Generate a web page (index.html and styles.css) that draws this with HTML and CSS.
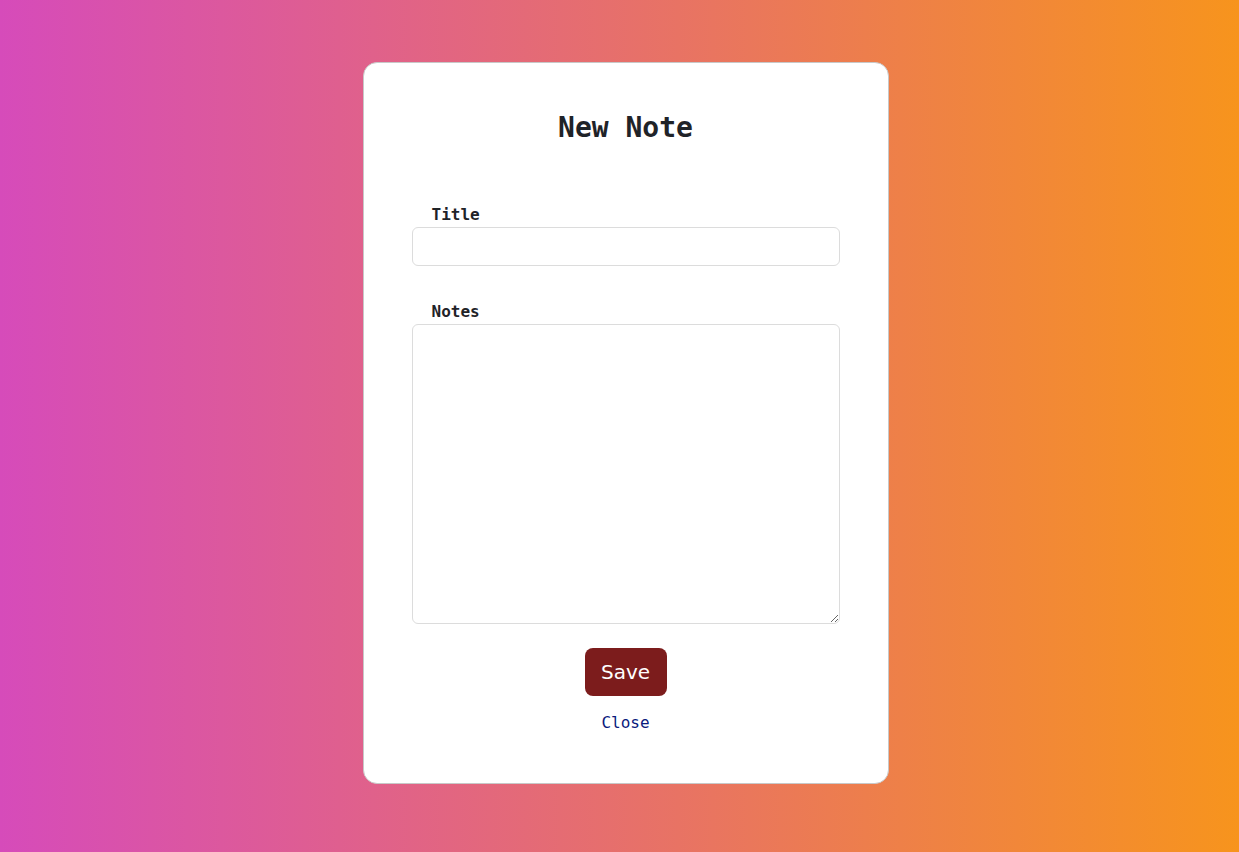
FILE: index.html
```html
<!DOCTYPE html>
<html>
<head>
<meta charset="utf-8">
<link rel="stylesheet" href="styles.css">
</head>
<body>
<div class="page">
  <div class="card">
    <h1 class="heading">New Note</h1>
    <form class="form">
      <div class="field">
        <label class="label" for="title">Title</label>
        <input class="input" id="title" type="text">
      </div>
      <div class="field">
        <label class="label" for="notes">Notes</label>
        <textarea class="textarea" id="notes"></textarea>
      </div>
      <div class="actions">
        <button type="button" class="save">Save</button>
        <a class="close" href="#">Close</a>
      </div>
    </form>
  </div>
</div>
</body>
</html>
```
FILE: styles.css
```css
html, body {
  margin: 0;
  padding: 0;
  height: 100%;
}
body {
  background: linear-gradient(to right, #d64bba, #f7941d);
  font-family: "DejaVu Sans Mono", monospace;
}
.page {
  display: flex;
  justify-content: center;
  padding-top: 62px;
  padding-left: 12px;
}
.card {
  box-sizing: border-box;
  width: 526px;
  height: 722px;
  background: #fff;
  border: 1px solid #c8c8c8;
  border-radius: 14px;
  padding: 48px 48px 0 48px;
}
.heading {
  margin: 0;
  text-align: center;
  font-size: 28px;
  font-weight: bold;
  color: #1f2328;
  line-height: 34px;
}
.form {
  margin-top: 60px;
}
.field {
  display: flex;
  flex-direction: column;
  margin-bottom: 36px;
}
.label {
  padding-left: 20px;
  font-size: 16px;
  font-weight: bold;
  color: #1f2328;
  line-height: 19px;
  margin-bottom: 3px;
}
.input {
  box-sizing: border-box;
  height: 39px;
  border: 1px solid #dcdcdc;
  border-radius: 6px;
  font-size: 16px;
  padding: 0 10px;
  margin: 0;
}
.textarea {
  box-sizing: border-box;
  height: 300px;
  border: 1px solid #dcdcdc;
  border-radius: 6px;
  font-size: 16px;
  padding: 10px;
  margin: 0;
}
.actions {
  display: flex;
  flex-direction: column;
  align-items: center;
  margin-top: -12px;
}
.save {
  width: 82px;
  height: 48px;
  background: #7c1c1c;
  color: #fff;
  border: none;
  border-radius: 8px;
  font-family: "DejaVu Sans", sans-serif;
  font-size: 20px;
  padding: 0;
}
.close {
  margin-top: 17px;
  font-size: 16px;
  color: #0a1a7c;
  text-decoration: none;
}
```
